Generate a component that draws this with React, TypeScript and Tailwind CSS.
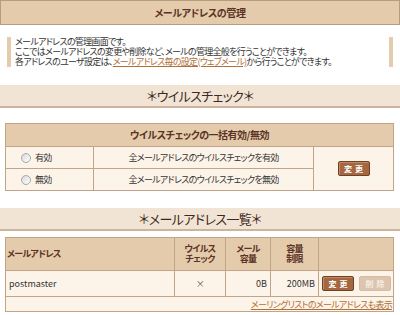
import React from 'react';

const font = "font-['Noto_Sans_CJK_JP','Noto_Sans',sans-serif] [font-feature-settings:'palt']";

const Radio = () => (
  <span className="inline-block w-[10px] h-[10px] rounded-full border border-[#a8a8a8] bg-gradient-to-br from-[#d8d8d8] to-white" />
);

const Btn = ({ label, disabled = false }: { label: string; disabled?: boolean }) => (
  <span
    className={
      disabled
        ? 'inline-flex items-center justify-center w-[32px] h-[15px] rounded-[2px] border border-[#d4bca6] bg-[#dcc5ae] text-[#f6ece2] text-[8px] tracking-[3px] pl-[3px] font-bold'
        : 'inline-flex items-center justify-center w-[32px] h-[15px] rounded-[2px] border border-[#6e4125] bg-[#a4673f] text-white text-[8px] tracking-[3px] pl-[3px] font-bold shadow-[inset_1px_1px_0_#c48a60]'
    }
  >
    {label}
  </span>
);

const SectionHeading = ({ children }: { children: React.ReactNode }) => (
  <div className="h-[23px] bg-[#f2e4d4] border-b-2 border-[#cdb49c] flex items-center justify-center text-[13px] tracking-[-0.6px] text-[#3a2a22]">
    {children}
  </div>
);

export default function App() {
  const cell = 'border border-[#c2a488]';
  return (
    <div className={`w-[400px] h-[315px] bg-white text-[9px] tracking-[-0.7px] leading-[10px] text-[#333] overflow-hidden ${font}`}>
      {/* title */}
      <div className="h-[25px] border border-[#b89a80] bg-[#e4cbab] flex items-center justify-center text-[10px] tracking-[-0.4px] font-bold text-[#5b3326]">
        メールアドレスの管理
      </div>

      {/* intro */}
      <div className="mt-[12px] mx-[7px] border-l-4 border-r-4 border-[#e4cbab] pl-[4px] leading-[10px]">
        <p>メールアドレスの管理画面です。</p>
        <p>ここではメールアドレスの変更や削除など、メールの管理全般を行うことができます。</p>
        <p>
          各アドレスのユーザ設定は、
          <span className="text-[#b0703a] underline">メールアドレス毎の設定(ウェブメール)</span>
          から行うことができます。
        </p>
      </div>

      <div className="mt-[18px]">
        <SectionHeading>＊ウイルスチェック＊</SectionHeading>
      </div>

      {/* virus check table */}
      <table className="mt-[15px] ml-[5px] w-[389px] border-collapse border border-[#b89a80]">
        <tbody>
          <tr className="h-[23px] bg-[#e4cbab]">
            <th colSpan={3} className={`${cell} text-[10px] tracking-[-0.5px] font-bold text-[#5b3326]`}>
              ウイルスチェックの一括有効/無効
            </th>
          </tr>
          <tr className="h-[22px] bg-[#fdf4e9]">
            <td className={`${cell} w-[88px] pl-[15px]`}>
              <span className="flex items-center gap-[4px]">
                <Radio />
                有効
              </span>
            </td>
            <td className={`${cell} w-[220px] text-center`}>全メールアドレスのウイルスチェックを有効</td>
            <td rowSpan={2} className={`${cell} text-center`}>
              <Btn label="変更" />
            </td>
          </tr>
          <tr className="h-[22px] bg-[#fdf4e9]">
            <td className={`${cell} pl-[15px]`}>
              <span className="flex items-center gap-[4px]">
                <Radio />
                無効
              </span>
            </td>
            <td className={`${cell} text-center`}>全メールアドレスのウイルスチェックを無効</td>
          </tr>
        </tbody>
      </table>

      <div className="mt-[17px]">
        <SectionHeading>＊メールアドレス一覧＊</SectionHeading>
      </div>

      {/* address list */}
      <table className="mt-[6px] ml-[5px] w-[389px] border-collapse border border-[#b89a80]">
        <tbody>
          <tr className="h-[33px] bg-[#e4cbab] font-bold text-[#5b3326] leading-[10px]">
            <th className={`${cell} w-[169px] text-left pl-[1px]`}>メールアドレス</th>
            <th className={`${cell} w-[51px] text-center`}>
              ウイルス
              <br />
              チェック
            </th>
            <th className={`${cell} w-[45px] text-center`}>
              メール
              <br />
              容量
            </th>
            <th className={`${cell} w-[48px] text-center`}>
              容量
              <br />
              制限
            </th>
            <th className={cell}></th>
          </tr>
          <tr className="h-[26px] bg-[#fdf4e9]">
            <td className={`${cell} pl-[3px] tracking-[0px]`}>postmaster</td>
            <td className={`${cell} text-center text-[#555]`}>×</td>
            <td className={`${cell} text-right pr-[3px] tracking-[0px]`}>0B</td>
            <td className={`${cell} text-right pr-[3px] tracking-[0px]`}>200MB</td>
            <td className={`${cell} pl-[3px]`}>
              <span className="flex items-center gap-[5px]">
                <Btn label="変更" />
                <Btn label="削除" disabled />
              </span>
            </td>
          </tr>
          <tr className="h-[15px] bg-[#fdf4e9]">
            <td colSpan={5} className={`${cell} text-right pr-[1px] leading-[13px]`}>
              <span className="text-[#b0703a] underline">メーリングリストのメールアドレスも表示</span>
            </td>
          </tr>
        </tbody>
      </table>
    </div>
  );
}
